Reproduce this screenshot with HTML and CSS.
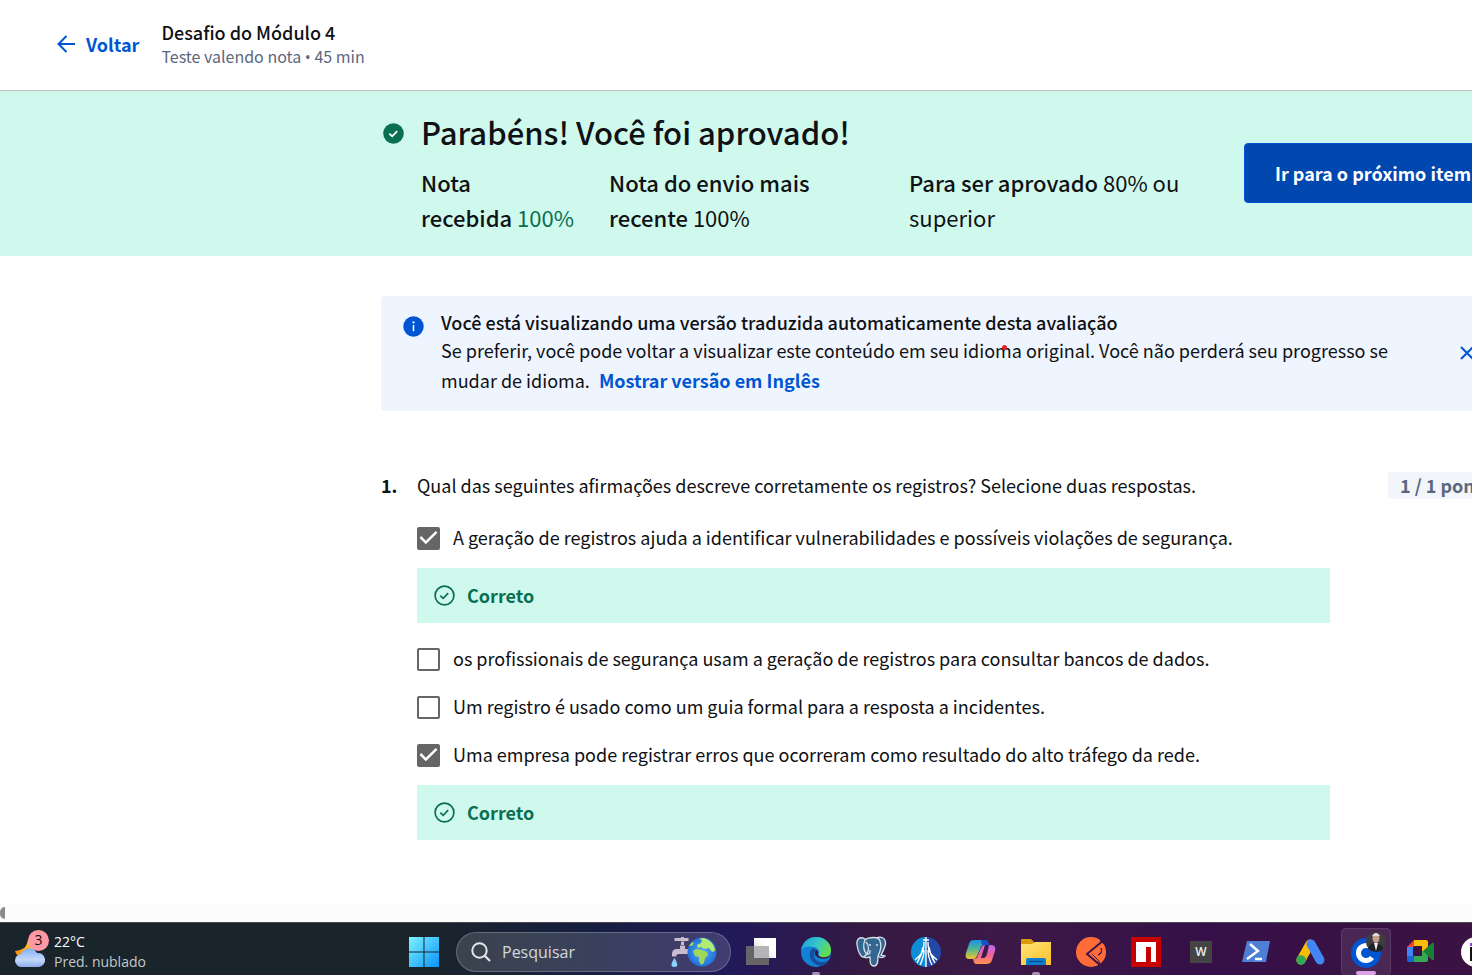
FILE: index.html
```html
<!DOCTYPE html>
<html lang="pt-BR">
<head>
<meta charset="utf-8">
<title>Desafio do Módulo 4</title>
<link rel="stylesheet" href="styles.css">
</head>
<body>
<header class="topbar">
  <a class="back" href="#"><svg width="20" height="20" viewBox="0 0 20 20" fill="none" stroke="currentColor" stroke-width="2"><path d="M19 10H3M10.500 2L2.500 10l8 8"/></svg>Voltar</a>
  <div>
    <div class="topbar-title">Desafio do Módulo 4</div>
    <div class="topbar-sub">Teste valendo nota <span class="dot">•</span> 45 min</div>
  </div>
</header>

<section class="banner">
  <div class="banner-text">
    <svg class="banner-icon" width="21" height="21" viewBox="0 0 21 21"><circle cx="10.500" cy="10.500" r="10.300" fill="#087051"/><path d="M6.300 10.600l2.900 2.700 5-5.200" fill="none" stroke="#fff" stroke-width="1.800"/></svg>
    <div>
      <h1>Parabéns! Você foi aprovado!</h1>
      <div class="stats">
        <p><b>Nota<br>recebida</b> <span class="green">100%</span></p>
        <p><b>Nota do envio mais recente</b> 100%</p>
        <p><b>Para ser aprovado</b> 80% ou superior</p>
      </div>
    </div>
  </div>
  <button class="next" type="button">Ir para o próximo item</button>
</section>

<main class="content">
  <section class="alert">
    <svg class="alert-icon" width="21" height="21" viewBox="0 0 21 21"><circle cx="10.500" cy="10.500" r="10.200" fill="#0056d2"/><circle cx="10.500" cy="6.400" r="1.100" fill="#fff"/><path d="M10.500 9v6.200" stroke="#fff" stroke-width="1.500"/></svg>
    <div class="alert-body">
      <h2>Você está visualizando uma versão traduzida automaticamente desta avaliação</h2>
      <p>Se preferir, você pode voltar a visualizar este conteúdo em seu <span class="marked">idioma</span> original. Você não perderá seu progresso se mudar de idioma. <a class="lang" href="#">Mostrar versão em Inglês</a></p>
    </div>
    <button class="close" type="button" aria-label="Fechar"><svg width="14" height="14" viewBox="0 0 14 14" stroke="#0056d2" stroke-width="2"><path d="M1 1l12 12M13 1L1 13"/></svg></button>
  </section>

  <section class="question">
    <div class="number">1.</div>
    <div class="question-body">
      <p class="prompt">Qual das seguintes afirmações descreve corretamente os registros? Selecione duas respostas.</p>
      <label class="option"><input type="checkbox" checked><span>A geração de registros ajuda a identificar vulnerabilidades e possíveis violações de segurança.</span></label>
      <div class="feedback"><svg width="21" height="21" viewBox="0 0 21 21" fill="none" stroke="currentColor"><circle cx="10.500" cy="10.500" r="9.400" stroke-width="1.700"/><path d="M6.300 10.600l2.900 2.700 5-5.200" stroke-width="1.700"/></svg><span>Correto</span></div>
      <label class="option"><input type="checkbox"><span>os profissionais de segurança usam a geração de registros para consultar bancos de dados.</span></label>
      <label class="option"><input type="checkbox"><span>Um registro é usado como um guia formal para a resposta a incidentes.</span></label>
      <label class="option"><input type="checkbox" checked><span>Uma empresa pode registrar erros que ocorreram como resultado do alto tráfego da rede.</span></label>
      <div class="feedback"><svg width="21" height="21" viewBox="0 0 21 21" fill="none" stroke="currentColor"><circle cx="10.500" cy="10.500" r="9.400" stroke-width="1.700"/><path d="M6.300 10.600l2.900 2.700 5-5.200" stroke-width="1.700"/></svg><span>Correto</span></div>
    </div>
    <div class="points">1 / 1 ponto</div>
  </section>
</main>

<div class="scroll"><div class="thumb"></div></div>

<footer class="taskbar">
  <div class="weather">
    <div class="weather-icon">
      <svg width="34" height="32" viewBox="0 0 34 32">
        <defs><linearGradient id="cl" x1="0" y1="0" x2="0" y2="1"><stop offset="0" stop-color="#7fb0f4"/><stop offset=".6" stop-color="#c4d8fb"/><stop offset="1" stop-color="#8faef0"/></linearGradient>
        <linearGradient id="mo" x1="0" y1="1" x2="1" y2="0"><stop offset="0" stop-color="#f5830f"/><stop offset="1" stop-color="#ffd23c"/></linearGradient></defs>
        <path d="M14 3c-1 8-4 11-13 12 2 7 10 9 15 5s5-13-2-17z" fill="url(#mo)"/>
        <path d="M8 31a6.500 6.500 0 01-1-13 9 9 0 0116-1 7 7 0 012 14z" fill="url(#cl)"/>
      </svg>
      <span class="badge">3</span>
    </div>
    <div><div class="temp">22°C</div><div class="forecast">Pred. nublado</div></div>
  </div>
  <button class="start" type="button" aria-label="Iniciar"><svg width="30" height="30" viewBox="0 0 30 30"><defs><linearGradient id="wn" x1="0" y1="0" x2="1" y2="1"><stop offset="0" stop-color="#7cf3ff"/><stop offset="1" stop-color="#0a93fb"/></linearGradient></defs><path d="M0 0h14.500v14.500H0zM15.500 0H30v14.500H15.500zM0 15.500h14.500V30H0zM15.500 15.500H30V30H15.500z" fill="url(#wn)"/></svg></button>
  <label class="search">
    <svg width="20" height="20" viewBox="0 0 20 20" fill="none" stroke="#e4e6ea" stroke-width="2"><circle cx="8.500" cy="8.500" r="7.200"/><path d="M13.700 13.700l5.300 5.300" stroke-width="2.200"/></svg>
    <input type="text" placeholder="Pesquisar" aria-label="Pesquisar">
    <svg width="48" height="32" viewBox="0 0 48 32">
      <defs><radialGradient id="gl"><stop offset="0" stop-color="#5aaef8"/><stop offset="1" stop-color="#1f70d8"/></radialGradient></defs>
      <path d="M3 21v-3q0-5 5-5h3V9h5v4h5v5H10q-3 0-3 3z" fill="#c9bccf"/><path d="M5.500 3.500h14M13.500 1v10" stroke="#c9bccf" stroke-width="3" fill="none"/><path d="M3 20.500h4.500M11 9.500h5M12 5.500h4" stroke="#80748e"/>
      <path d="M5.500 22q-6 9 0 9 5.500 0 0-9z" fill="#8ed0fa"/>
      <circle cx="33" cy="16" r="14.500" fill="url(#gl)"/>
      <path d="M33 2q5 0 9 4 4 4 4 9l-3 1-3-4-5 1-3-2-3 1-1-3 4-2 1-3-3-1z" fill="#b2ea72"/>
      <path d="M24 15l3-2 6 1 5 2 1 3-3 3-1 5-3 2-2-4v-4l-4-1zM20 10l3-4 2 1-2 3z" fill="#9fd85a"/>
    </svg>
  </label>
  <nav class="apps">
    <button class="app" type="button" aria-label="Visão de tarefas"><svg width="32" height="32" viewBox="0 0 32 32"><defs><linearGradient id="tv" x1="0" y1="1" x2="1" y2="0"><stop offset="0" stop-color="#ccc"/><stop offset=".6" stop-color="#fff"/></linearGradient></defs><path d="M1 10h23v19H1z" fill="#666466"/><path d="M9 2h22v20H9z" fill="url(#tv)"/><path d="M9 10h15v12H9z" fill="#b5b5b7"/></svg></button>
    <button class="app running" type="button" aria-label="Edge"><svg width="32" height="32" viewBox="0 0 32 32"><defs><linearGradient id="e1" x1="0" y1="0" x2="1" y2=".5"><stop offset="0" stop-color="#179be0"/><stop offset=".55" stop-color="#36c6c8"/><stop offset="1" stop-color="#64dc4c"/></linearGradient></defs><circle cx="16" cy="16" r="15" fill="#1182d8"/><path d="M1 14C3 5 9 1 16 1c9 0 15 6 15 13 0 5-3 8-8 8-4 0-5-2-4-4s0-6-5-7-10-1-13 3z" fill="url(#e1)"/><path d="M13 12c-5 3-5 13 4 17 5 2 9 0 12-5-6 4-15 2-15-5 0-3 2-4 3-5z" fill="#174f9c"/><path d="M17 14c-2 1-3 4-1 6 3 3 9 4 13 1l2-3c-3 4-9 4-12 2-2-2 0-4-2-6z" fill="#351a45"/></svg></button>
    <button class="app" type="button" aria-label="PostgreSQL"><svg width="32" height="32" viewBox="0 0 32 32" fill="#336791" stroke="#d9dfe6" stroke-width="1.300"><path d="M10 3C5 0 1 3 2 9c1 7 4 12 6 12s4-3 5-4zM21 2c7-3 11 2 9 8-1 4-3 7-4 9l4 1c-2 2-5 2-7 0z"/><path d="M10 4c3-3 14-4 15 1 2 5 0 11-2 15 0 4 0 10-4 10s-4-4-4-9c-2 0-3 2-6 0l3-3c-4-3-4-10-2-14z"/><path d="M11 6c3 3 3 8 1 12 4 0 3-2 3-4M14 9h2M21 9h2" fill="none"/></svg></button>
    <button class="app" type="button" aria-label="Catedral"><svg width="32" height="32" viewBox="0 0 32 32"><circle cx="16" cy="16" r="15" fill="#2249a8"/><path d="M16 1a15 15 0 000 30z" fill="#0d8fd8"/><path d="M16 1v30M13 4h6M14 6c0 9-2 12-9 18M13 11c-1 8-3 11-6 16M14 14c0 6-2 11-4 15M18 6c0 9 2 12 9 18M19 11c1 8 3 11 6 16M18 14c0 6 2 11 4 15" fill="none" stroke="#fff" stroke-width="1.400"/></svg></button>
    <button class="app" type="button" aria-label="Copilot"><svg width="32" height="32" viewBox="0 0 32 32"><defs><linearGradient id="c1" x1="0" y1="0" x2="0" y2="1"><stop offset="0" stop-color="#1890e8"/><stop offset=".5" stop-color="#55b98c"/><stop offset="1" stop-color="#f5c02c"/></linearGradient><linearGradient id="c2" x1="0" y1="0" x2="0" y2="1"><stop offset="0" stop-color="#b56af4"/><stop offset=".5" stop-color="#f2609c"/><stop offset="1" stop-color="#ff934c"/></linearGradient></defs><path d="M9 4h11c2 0 3 1 4 5h-5c-2 0-3 1-4 4l-3 7c-1 2-2 3-4 3H5c-4 0-5-2-4-6l3-9c1-3 2-4 5-4z" fill="url(#c1)"/><path d="M24 9h2c4 0 5 3 4 6l-3 9c-1 3-3 4-6 4h-9c-3 0-3-2-4-5 3 0 4-1 5-4l3-7c1-2 2-3 4-3l-4 13h2c2 0 3-1 4-4z" fill="url(#c2)"/><path d="M16 4h4c2 0 3 1 4 5h-5l-2 0z" fill="#1552c4"/></svg></button>
    <button class="app running" type="button" aria-label="Explorador"><svg width="32" height="32" viewBox="0 0 32 32"><defs><linearGradient id="fo" x1="0" y1="0" x2="1" y2="1"><stop offset="0" stop-color="#ffe477"/><stop offset="1" stop-color="#fbc02a"/></linearGradient></defs><path d="M1 4q0-1 1-1h9l3 3v4H1z" fill="#dc9a08"/><path d="M1 8h11l3-2h16v23H1z" fill="url(#fo)"/><path d="M6 29v-5q0-2 2-2h16q2 0 2 2v5z" fill="#0f7dd0"/><path d="M9 25.500h14" stroke="#08478a" stroke-width="1.200"/></svg></button>
    <button class="app" type="button" aria-label="Postman"><svg width="32" height="32" viewBox="0 0 32 32"><circle cx="16" cy="16" r="15" fill="#ff6c37"/><path d="M29 4L12 18l13 11" fill="none" stroke="#3b154a" stroke-width="2"/><path d="M25 5l6 4-4-6zM17 18l6 6 3 5" fill="none" stroke="#3b154a"/><path d="M26 12q2 4-3 7 5-1 3-7z" fill="#3b154a" stroke="#3b154a"/></svg></button>
    <button class="app" type="button" aria-label="npm"><svg width="32" height="32" viewBox="0 0 32 32"><path d="M1 1h30v30H1z" fill="#c90000"/><path d="M6 6h20v20h-5V11h-5v15H6z" fill="#fff"/></svg></button>
    <button class="app" type="button" aria-label="W"><span class="letter">W</span></button>
    <button class="app" type="button" aria-label="PowerShell"><svg width="32" height="32" viewBox="0 0 32 32"><path d="M7 5h23l-4 21H2z" fill="#4d80d4"/><path d="M10 8l8 7-11 8M15 23h7" fill="none" stroke="#fff" stroke-width="2.400"/></svg></button>
    <button class="app" type="button" aria-label="Google Ads"><svg width="32" height="32" viewBox="0 0 32 32" stroke-width="9" stroke-linecap="round"><path d="M15 8L6 24" stroke="#fbbc04"/><path d="M16 8l9 16" stroke="#4285f4"/><circle cx="6" cy="24" r="4.800" fill="#34a853"/></svg></button>
    <button class="app active" type="button" aria-label="Coursera"><svg width="38" height="44" viewBox="0 0 38 44"><circle cx="19" cy="23" r="15" fill="#0056d2"/><path d="M25 18.500a7.500 7.500 0 100 9" fill="none" stroke="#fff" stroke-width="5"/><circle cx="29" cy="12" r="10" fill="#403d40"/><path d="M21 19q1-5 6-6l4 1q5 1 5 5-6 6-15 0z" fill="#202026"/><ellipse cx="29" cy="8" rx="3.500" ry="5" fill="#c6a08f"/><path d="M25 6q4-6 8 0z" fill="#ddd"/><path d="M27 13l2 8 2-8z" fill="#eee"/></svg></button>
    <button class="app" type="button" aria-label="Meet"><svg width="32" height="32" viewBox="0 0 32 32"><path d="M2 11l7-7v7z" fill="#ea4335"/><path d="M2 11h6v10H2z" fill="#4285f4"/><path d="M2 20h7v6H4q-2 0-2-2z" fill="#1967d2"/><path d="M9 4h12q2 0 2 2v9l-6 1v-6H9z" fill="#fbbc04"/><path d="M9 20h8v-5h6v9q0 2-2 2H9z" fill="#34a853"/><path d="M18 15l9-8q2-1 2 1v15q0 2-2 1z" fill="#178038"/></svg></button>
    <button class="app" type="button" aria-label="Aplicativo"><svg width="32" height="32" viewBox="0 0 32 32"><circle cx="16" cy="16" r="15" fill="#fff"/><path d="M10 11h5v14h-5z" fill="#111"/><path d="M10 7h6v3h-6z" fill="#9b3ddb"/></svg></button>
  </nav>
</footer>
</body>
</html>
```
FILE: styles.css
```css
* { box-sizing: border-box; }
html, body { height: 100%; }
body {
  margin: 0;
  display: flex;
  flex-direction: column;
  overflow: hidden;
  background: #fff;
  color: #0f1114;
  font-family: "Noto Sans CJK SC", "Noto Sans", sans-serif;
  font-size: 18px;
  line-height: 30px;
}
h1, h2, p { margin: 0; }
h1, h2, b { font-weight: 500; }
a { text-decoration: none; color: #0056d2; }
button { font: inherit; border: 0; padding: 0; cursor: pointer; }
svg { display: block; flex: none; }

.topbar {
  flex: none;
  display: flex;
  align-items: center;
  gap: 22px;
  height: 91px;
  padding: 0 56px 2px;
  border-bottom: 1px solid #bdbdbd;
}
.back { display: flex; align-items: center; gap: 10px; font-weight: 700; }
.topbar-title { font-weight: 500; font-size: 18px; line-height: 24px; }
.topbar-sub { color: #5b6780; font-size: 16px; line-height: 24px; }
.dot { font-family: "Open Sans", sans-serif; }

.banner {
  flex: none;
  display: flex;
  align-items: center;
  gap: 40px;
  padding: 20px 0 21px 381px;
  margin-right: -30px;
  background: #d0f9ed;
}
.banner-text { flex: 1; display: flex; gap: 17px; }
.banner-icon { margin: 12px 0 0 2px; }
h1 { font-size: 31px; line-height: 42px; margin-bottom: 12px; }
.stats {
  display: grid;
  grid-template-columns: 158px 260px 1fr;
  column-gap: 30px;
  font-size: 22px;
  line-height: 35px;
}
.stats p:last-child { padding-left: 10px; }
.green { color: #087051; }
.next {
  flex: none;
  height: 60px;
  padding: 0 30px;
  border: 1px solid #0056d2;
  border-radius: 4px;
  background: #0048b0;
  color: #fff;
  font-weight: 700;
}

.content {
  flex: 1;
  min-height: 0;
  overflow: hidden;
  padding: 40px 0 0 381px;
  margin-right: -38px;
}
.alert {
  display: flex;
  align-items: center;
  padding: 14px 36px 16px 22px;
  border-radius: 4px;
  background: #eff5fe;
}
.alert-icon { align-self: flex-start; margin: 6px 17px 0 0; }
.alert-body { flex: 1; padding-right: 60px; }
h2 { font-size: 18px; line-height: 25px; }
.lang { font-weight: 700; margin-left: 5px; }
.marked { position: relative; }
.marked::after {
  content: "";
  position: absolute;
  right: 15px;
  top: 8px;
  width: 5px;
  height: 5px;
  border-radius: 50%;
  background: #e3202c;
}
.close { background: none; }

.question { display: flex; margin-top: 59px; }
.number { flex: none; width: 36px; font-weight: 700; }
.question-body { flex: 1; margin-right: 58px; }
.prompt { margin-bottom: 14px; }
.option { display: flex; align-items: center; gap: 13px; height: 48px; }
.option span, .feedback span { padding-bottom: 2px; }
.option input {
  appearance: none;
  flex: none;
  position: relative;
  width: 23px;
  height: 23px;
  margin: 0;
  border: 2px solid #666;
  border-radius: 2px;
  background: #fff;
}
.option input:checked { background: #666; }
.option input:checked::before {
  content: "";
  position: absolute;
  inset: 0;
  background: #fff;
  clip-path: polygon(3% 50%, 12% 40%, 36% 64%, 88% 13%, 97% 23%, 36% 83%);
}
.feedback {
  display: flex;
  align-items: center;
  gap: 12px;
  height: 55px;
  margin: 6px 0 12px;
  padding-left: 17px;
  background: #d0f9ed;
  color: #087051;
  font-weight: 700;
}
.points {
  flex: none;
  align-self: flex-start;
  width: 122px;
  margin-top: 2px;
  padding: 0 12px;
  border-radius: 4px;
  background: #f2f5fa;
  color: #5b6780;
  font-weight: 700;
  line-height: 27px;
}

.scroll { flex: none; display: flex; align-items: center; height: 18px; background: #fcfcfc; }
.thumb { width: 5px; height: 12px; border-radius: 5px 0 0 5px; background: #8b8b8b; }

.taskbar {
  flex: none;
  display: flex;
  align-items: center;
  height: 53px;
  padding: 6px 0 0 14px;
  border-top: 1px solid #4a4a50;
  background: linear-gradient(90deg, #19242b 0, #19242b 29%, #171f42 41%, #22195a 50%, #351a42 59%, #3d1947 68%, #351048 82%, #3b1342 100%);
  color: #fff;
  font-family: "Open Sans", "Noto Sans", sans-serif;
  font-size: 14px;
  line-height: 20px;
}
.weather { flex: none; display: flex; gap: 6px; width: 395px; }
.weather-icon { position: relative; padding-top: 4px; }
.badge {
  position: absolute;
  left: 14px;
  top: -2px;
  width: 21px;
  height: 21px;
  border-radius: 50%;
  background: #ff99a4;
  color: #111;
  text-align: center;
}
.forecast { color: #c4c8cb; }
.start { flex: none; width: 30px; background: none; }
.search {
  flex: none;
  display: flex;
  align-items: center;
  gap: 11px;
  width: 275px;
  height: 40px;
  margin: 0 5px 0 17px;
  padding: 0 13px 0 14px;
  border: 1px solid rgba(255, 255, 255, .22);
  border-radius: 20px;
  background: rgba(255, 255, 255, .15);
}
.search input {
  flex: 1;
  min-width: 0;
  padding: 0;
  border: 0;
  background: none;
  color: #fff;
  font: 16px/20px "Open Sans", "Noto Sans", sans-serif;
}
.search input::placeholder { color: #d5d8de; opacity: 1; }
.apps { display: flex; gap: 5px; }
.app {
  position: relative;
  flex: none;
  display: flex;
  align-items: center;
  justify-content: center;
  width: 50px;
  height: 48px;
  border-radius: 5px;
  background: none;
}
.running::after, .active::after {
  content: "";
  position: absolute;
  left: 21px;
  bottom: 0;
  width: 8px;
  height: 4px;
  border-radius: 2px;
  background: #a98fb0;
}
.active { background: rgba(255, 255, 255, .09); border: 1px solid rgba(255, 255, 255, .1); }
.active::after { left: 14px; width: 20px; background: #dda0e6; }
.letter { width: 22px; background: #444; color: #eee; font: 600 12px/22px "Open Sans", sans-serif; }
```
